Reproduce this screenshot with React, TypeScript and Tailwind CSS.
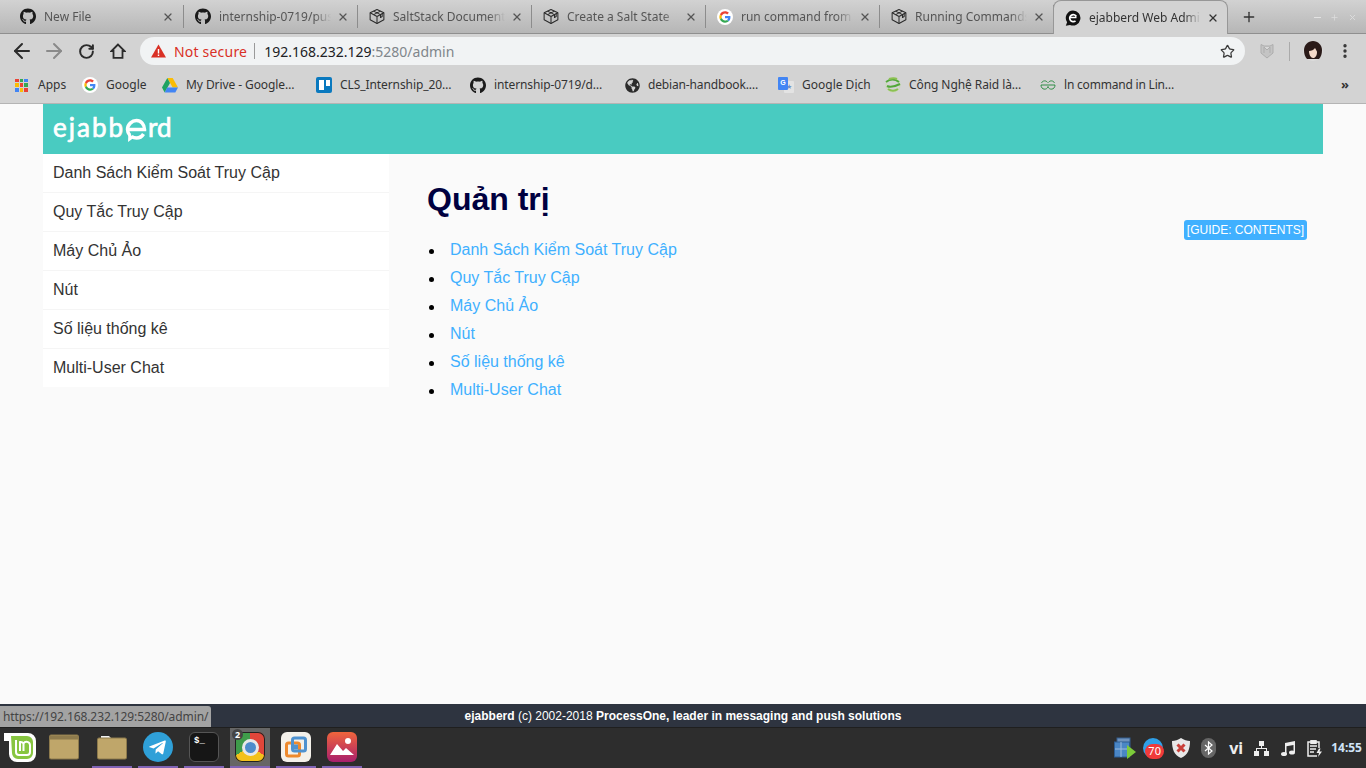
import { FC, ReactNode } from "react";
import { ArrowLeft, ArrowRight, MoreVertical, Plus, RotateCw, Star, X } from "lucide-react";
import { FaGithub, FaGlobeAmericas, FaTelegramPlane } from "react-icons/fa";

const GoogleIcon = ({ size = 16 }: { size?: number }) => (
  <svg width={size} height={size} viewBox="0 0 48 48" className="rounded-full bg-white">
    <g transform="translate(7 7) scale(0.71)">
      <path fill="#EA4335" d="M24 9.5c3.5 0 6.7 1.2 9.2 3.600l6.900-6.900C35.900 2.400 30.400 0 24 0 14.600 0 6.500 5.400 2.600 13.200l8 6.200C12.500 13.600 17.800 9.500 24 9.500z" />
      <path fill="#4285F4" d="M46.900 24.500c0-1.600-.1-3.100-.4-4.500H24v9h12.900c-.6 3-2.200 5.500-4.700 7.200l7.700 6c4.500-4.200 7-10.300 7-17.700z" />
      <path fill="#FBBC05" d="M10.500 28.600c-.5-1.500-.8-3-.8-4.600s.3-3.100.8-4.600l-8-6.200C.9 16.500 0 20.100 0 24s.9 7.500 2.600 10.800l7.900-6.200z" />
      <path fill="#34A853" d="M24 48c6.500 0 11.900-2.100 15.900-5.800l-7.700-6c-2.200 1.400-4.900 2.300-8.200 2.300-6.200 0-11.500-4.200-13.400-9.900l-8 6.200C6.500 42.600 14.600 48 24 48z" />
    </g>
  </svg>
);

const SaltIcon = () => (
  <svg width="17" height="17" viewBox="0 0 17 17" fill="none" stroke="#2b2b2b" strokeWidth="1.100" strokeLinejoin="round">
    <path d="M8.500 1 15.800 4.500V12L8.500 16 1.200 12V4.500z" />
    <path d="M1.200 4.500 8.500 8.500 15.800 4.500M8.500 8.500V16" />
    <path d="M4.800 2.800 12.200 6.500V9.500L14 8.500V5.300M12.200 2.800 5 6.500" />
  </svg>
);

const EjabberdTabIcon = () => (
  <svg width="16" height="16" viewBox="0 0 16 16">
    <path fill="#111" d="M8 .5a7.500 7.500 0 1 1-3 14.400L.8 15.800l1.300-3.600A7.500 7.500 0 0 1 8 .5z" />
    <path fill="none" stroke="#fff" strokeWidth="1.700" d="M4.500 7.500h7M11.300 6.500A3.500 3.500 0 1 0 10.500 10.800" />
  </svg>
);

type TabProps = { icon: ReactNode; title: string; first?: boolean };

const Tab: FC<TabProps> = ({ icon, title, first }) => (
  <div
    className={`flex h-[33px] shrink-0 items-center border-r border-[#8c8c8c] pl-[11px] [border-image:linear-gradient(transparent_6px,#8c8c8c_6px,#8c8c8c_27px,transparent_27px)_1] ${
      first ? "w-[175px]" : "w-[174px]"
    }`}
  >
    <span className="flex w-[16px] items-center justify-center">{icon}</span>
    <span className="ml-2 w-[112px] whitespace-nowrap text-[12px] text-[#555] [mask-image:linear-gradient(to_right,black_85%,transparent)]">
      {title}
    </span>
    <X size={12} strokeWidth={2.500} className="ml-[6px] text-[#555]" />
  </div>
);

const TabStrip = () => (
  <div className="flex h-[34px] shrink-0 border-b border-[#8f8f8f] bg-gradient-to-b from-[#d2d2d2] to-[#b6b6b6] pl-[9px]">
    <Tab first icon={<FaGithub size={17} className="text-[#1b1b1b]" />} title="New File" />
    <Tab icon={<FaGithub size={17} className="text-[#1b1b1b]" />} title="internship-0719/pus" />
    <Tab icon={<SaltIcon />} title="SaltStack Document" />
    <Tab icon={<SaltIcon />} title="Create a Salt State" />
    <Tab icon={<GoogleIcon />} title="run command from" />
    <Tab icon={<SaltIcon />} title="Running Commands" />
    <div className="z-10 -ml-px flex h-[34px] w-[175px] shrink-0 items-center rounded-t-[8px] border border-b-0 border-[#979797] bg-[#d3d3d3] pl-[11px]">
      <EjabberdTabIcon />
      <span className="ml-[8px] w-[112px] whitespace-nowrap text-[12px] text-[#333] [mask-image:linear-gradient(to_right,black_85%,transparent)]">
        ejabberd Web Admi
      </span>
      <X size={12} strokeWidth={2.500} className="ml-[6px] text-[#333]" />
    </div>
    <Plus size={16} strokeWidth={2} className="ml-[13px] mt-[9px] text-[#333]" />
    <div className="ml-auto mr-[9px] mt-[11px] flex h-[12px] items-center gap-[9px] text-[#dcdcdc]">
      <span className="h-[1px] w-[7px] bg-[#e2e2e2]" />
      <Plus size={9} strokeWidth={2} />
      <X size={9} strokeWidth={2.500} />
    </div>
  </div>
);

const Toolbar = () => (
  <div className="flex h-[34px] shrink-0 items-center bg-[#d3d3d3] pl-[10px]">
    <ArrowLeft size={24} strokeWidth={2} className="text-[#2b2b2b]" />
    <ArrowRight size={24} strokeWidth={2} className="ml-[8px] text-[#8a8a8a]" />
    <RotateCw size={17} strokeWidth={2.800} className="ml-[12px] text-[#2b2b2b]" />
    <svg width="16" height="16" viewBox="0 0 16 16" className="ml-[15px]" fill="none" stroke="#2b2b2b" strokeWidth="1.800">
      <path d="M8 1.500 1.500 8H3.500V14.800H12.500V8H14.500z" strokeLinejoin="miter" />
    </svg>
    <div className="ml-[14px] flex h-[28px] w-[1105px] items-center rounded-full bg-[#f1f3f4] pl-[11px] pr-[10px] text-[14px]">
      <svg width="15" height="14" viewBox="0 0 15 14">
        <path fill="#d93025" d="M7.500.500 15 13.500H0z" />
        <path fill="#fff" d="M6.800 5h1.400v4.500H6.800zM6.800 10.500h1.400v1.400H6.800z" />
      </svg>
      <span className="ml-[8px] tracking-[0.2px] text-[#d93025]">Not secure</span>
      <span className="ml-[7px] h-[16px] w-px bg-[#9a9a9a]" />
      <span className="ml-[9px] text-[#202124]">192.168.232.129</span>
      <span className="text-[#80868b]">:5280/admin</span>
      <Star size={15} strokeWidth={2} className="ml-auto text-[#3a3a3a]" />
    </div>
    <svg width="14" height="16" viewBox="0 0 14 16" className="ml-[15px]" fill="#c4c4c4" stroke="#adadad">
      <path d="M1 1.500 4 3h6l3-1.500V10l-6 5-6-5z" />
      <path fill="#d8d8d8" d="M4 4v6M10 4v6M4 4l3 3 3-3" />
    </svg>
    <span className="ml-[15px] h-[19px] w-px bg-[#aaaaaa]" />
    <svg width="20" height="20" viewBox="0 0 20 20" className="ml-[13px]">
      <circle cx="10" cy="10" r="10" fill="#dcdcdc" />
      <path fill="#2a1a18" d="M10 0c5 0 9 4 9 9 0 4-1 7-3 9H4C2 16 1 13 1 9c0-5 4-9 9-9z" />
      <path fill="#f4d9c9" d="M6 10c2 0 5-1 6-3 1 2 2 3 2 4 0 4-2 6-4 6s-4-3-4-7z" />
    </svg>
    <MoreVertical size={18} strokeWidth={2.500} className="ml-[13px] text-[#333]" />
  </div>
);

const AppsIcon = () => {
  const cols = ["#ea4335", "#34a853", "#4285f4", "#fbbc05", "#ea4335", "#34a853", "#4285f4", "#fbbc05", "#ea4335"];
  return (
    <div className="grid h-[13px] w-[13px] grid-cols-3 gap-px">
      {cols.map((c, i) => (
        <span key={i} style={{ backgroundColor: c }} />
      ))}
    </div>
  );
};

const DriveIcon = () => (
  <svg width="16" height="15" viewBox="0 0 16 15">
    <path fill="#fbbc05" d="M5.300 0h5.400l5.300 9.500h-5.300z" />
    <path fill="#1ea362" d="M5.300 0 0 9.500 2.700 14.500 8 5z" />
    <path fill="#4285f4" d="M5.200 9.500H16l-2.700 5H2.700z" />
  </svg>
);

const TrelloIcon = () => (
  <div className="flex h-[16px] w-[16px] items-start gap-[2px] rounded-[2px] bg-[#0a79bf] p-[2.500px]">
    <span className="h-[10px] w-[5px] bg-white" />
    <span className="h-[6px] w-[4px] bg-white" />
  </div>
);

const TranslateIcon = () => (
  <div className="relative h-[16px] w-[16px]">
    <span className="absolute left-[6px] top-[4px] flex h-[12px] w-[10px] items-center justify-center rounded-[1px] bg-[#e3e3e3] text-[7px] text-[#6d8fc9]">
      ★
    </span>
    <span className="absolute left-0 top-0 flex h-[13px] w-[10px] items-center justify-center rounded-[1px] bg-[#4285f4] font-['Liberation_Sans',sans-serif] text-[7px] font-bold text-white">
      G
    </span>
  </div>
);

const RaidIcon = () => (
  <svg width="16" height="16" viewBox="0 0 16 16" fill="none" strokeWidth="2">
    <circle cx="8" cy="8" r="7" stroke="#c9dcb0" strokeWidth="1" />
    <path stroke="#52a83a" d="M1 5c4-3 9-3 13 0M2 9c4 2 9 0 13-2" />
    <path stroke="#8cc152" d="M3 12c3 2 7 2 10 0M4 2c3-1 6-1 8 0" />
  </svg>
);

const GfgIcon = () => (
  <svg width="16" height="10" viewBox="0 0 16 10" fill="none" stroke="#2f8d46" strokeWidth="1">
    <path d="M1 5h14M1.500 3C2.500 .5 6 0 7.500 2.500M14.500 3C13.500 .5 10 0 8.500 2.500M1 5c0 5 6 5.500 7 1.500M15 5c0 5-6 5.500-7 1.500" />
  </svg>
);

type BookmarkProps = { icon: ReactNode; label: string; width: string; spacing?: string };

const Bookmark: FC<BookmarkProps> = ({ icon, label, width, spacing }) => (
  <div className={`flex shrink-0 items-center ${width}`}>
    <span className="flex w-[16px] items-center justify-center">{icon}</span>
    <span className={`ml-[8px] whitespace-nowrap text-[12px] text-[#333] ${spacing ?? ""}`}>{label}</span>
  </div>
);

const BookmarkBar = () => (
  <div className="flex h-[36px] shrink-0 items-center border-b border-[#b4b4b4] bg-[#d3d3d3] pb-[1px] pl-[15px]">
    <div className="flex w-[67px] shrink-0 items-center">
      <AppsIcon />
      <span className="ml-[10px] text-[12px] text-[#333]">Apps</span>
    </div>
    <Bookmark icon={<GoogleIcon />} label="Google" width="w-[80px]" />
    <Bookmark icon={<DriveIcon />} label="My Drive - Google…" width="w-[154px]" spacing="tracking-[-0.08px]" />
    <Bookmark icon={<TrelloIcon />} label="CLS_Internship_20…" width="w-[154px]" spacing="tracking-[-0.08px]" />
    <Bookmark icon={<FaGithub size={17} className="text-[#1b1b1b]" />} label="internship-0719/d…" width="w-[154px]" spacing="tracking-[-0.12px]" />
    <Bookmark icon={<FaGlobeAmericas size={15} className="text-[#2b2b2b]" />} label="debian-handbook.…" width="w-[154px]" spacing="tracking-[-0.15px]" />
    <Bookmark icon={<TranslateIcon />} label="Google Dịch" width="w-[107px]" />
    <Bookmark icon={<RaidIcon />} label="Công Nghệ Raid là…" width="w-[155px]" spacing="tracking-[-0.08px]" />
    <Bookmark icon={<GfgIcon />} label="ln command in Lin…" width="w-[150px]" spacing="tracking-[-0.2px]" />
    <span className="ml-auto mr-[17px] text-[13px] font-bold text-[#333]">»</span>
  </div>
);

const EjabberdLogo = () => (
  <div className="flex items-start font-['Lato',sans-serif] text-[26px] leading-[28px] text-white [-webkit-text-stroke:0.7px_white]">
    <span className="tracking-[2px]">ejabb</span>
    <svg width="23" height="24" viewBox="0 0 23 24" className="mt-[5px]">
      <path fill="none" stroke="#fff" strokeWidth="3.500" d="M3.500 11.500h16c0-5-3.500-9-8-9s-9 4-9 9c0 2.500 1 4.500 2.500 6" />
      <path fill="none" stroke="#fff" strokeWidth="3.500" d="M18.500 16c-1.500 2.500-4 4-7 4-2 0-3.500-.5-5-1.500" />
      <path fill="#fff" d="M3.500 14l5 6-5.500 4z" />
    </svg>
    <span>rd</span>
  </div>
);

const links = [
  "Danh Sách Kiểm Soát Truy Cập",
  "Quy Tắc Truy Cập",
  "Máy Chủ Ảo",
  "Nút",
  "Số liệu thống kê",
  "Multi-User Chat",
];

const Page = () => (
  <div className="min-h-0 flex-1 bg-[#fafafa] px-[43px] font-['Liberation_Sans',sans-serif]">
    <div className="flex h-[50px] items-center bg-[#49cbc1] pb-[3px] pl-[10px]">
      <EjabberdLogo />
    </div>
    <div className="flex">
      <div className="w-[346px] shrink-0 self-start bg-white">
        {links.map((l) => (
          <div key={l} className="flex h-[39px] items-center border-b border-[#f5f5f5] pl-[10px] text-[16px] text-[#333] last:h-[38px] last:border-b-0">
            {l}
          </div>
        ))}
      </div>
      <div className="flex flex-1 justify-between pl-[38px] pr-[16px]">
        <div>
          <h1 className="mt-[27px] text-[32px] font-bold leading-[37px] text-[#000040]">Quản trị</h1>
          <ul className="mt-[18px] pl-[2px] text-[16px] leading-[28px] text-[#40b0ff]">
            {links.map((l) => (
              <li key={l} className="flex items-center">
                <span className="mr-[16px] mt-[3px] h-[5px] w-[5px] rounded-full bg-black" />
                {l}
              </li>
            ))}
          </ul>
        </div>
        <div className="mt-[66px] flex h-[20px] w-[123px] items-center justify-center rounded-[3px] bg-[#40b0ff] text-[12px] text-white">
          [GUIDE: CONTENTS]
        </div>
      </div>
    </div>
  </div>
);

const Footer = () => (
  <div className="relative h-[23px] shrink-0 bg-[#2e3440] text-center font-['Liberation_Sans',sans-serif] text-[12px] leading-[24px] text-white">
    <b>ejabberd</b> (c) 2002-2018 <b>ProcessOne, leader in messaging and push solutions</b>
    <div className="absolute bottom-0 left-0 h-[21px] w-[211px] rounded-tr-[3px] bg-[#a3a3a3] pl-[3px] text-left font-['Noto_Sans',sans-serif] text-[12px] leading-[21px] tracking-[-0.1px] text-[#444]">
      https://192.168.232.129:5280/admin/
    </div>
  </div>
);

const FolderIcon = ({ tab }: { tab?: boolean }) => (
  <svg width="30" height="26" viewBox="0 0 30 26">
    {tab && <path fill="#f2f2f2" d="M4 2h8l2 2H4z" />}
    <rect x="0.500" y={tab ? 4 : 1} width="29" height={tab ? 21 : 24} rx="1.500" fill="#bfa66a" stroke="#8d7a4c" />
    {!tab && <rect x="1" y="1.500" width="28" height="4" fill="#8e7b4d" />}
  </svg>
);

const DockSlot: FC<{ children: ReactNode; active?: boolean }> = ({ children, active }) => (
  <div className={`flex h-[40px] w-[40px] shrink-0 items-center justify-center border-b-[2px] border-[#7f63b5] ${active ? "bg-[#666666]" : ""}`}>
    {children}
  </div>
);

const MintIcon = () => (
  <svg width="32" height="30" viewBox="0 0 32 30">
    <path fill="#fff" d="M0 1h24a8 8 0 0 1 8 8v13a8 8 0 0 1-8 8H13a8 8 0 0 1-8-8V9H0z" />
    <path fill="#87c540" d="M7 4h16a6 6 0 0 1 6 6v11a6 6 0 0 1-6 6H14a6 6 0 0 1-6-6z" />
    <path fill="none" stroke="#fff" strokeWidth="2" d="M12 8v12a3 3 0 0 0 3 3h8a3 3 0 0 0 3-3v-7a3.500 3.500 0 0 0-6.500-1.500A3.500 3.500 0 0 0 16 10v9M19.500 12v7" />
  </svg>
);

const ChromeIcon = () => (
  <div className="flex h-[30px] w-[30px] items-center justify-center overflow-hidden rounded-[7px] bg-[conic-gradient(#e0463a_0deg_120deg,#f3c11c_120deg_240deg,#3f9c4a_240deg_360deg)] shadow-[inset_0_0_0_1px_#222]">
    <span className="h-[17px] w-[17px] rounded-full border-[3px] border-[#e8e8e8] bg-[#4e8ccb]" />
  </div>
);

const VmwareIcon = () => (
  <div className="flex h-[30px] w-[30px] items-center justify-center rounded-[6px] bg-[#f4f1ea]">
    <svg width="22" height="22" viewBox="0 0 22 22" fill="none" strokeWidth="3">
      <rect x="1.500" y="7" width="13" height="13" rx="2" stroke="#ee8a2d" />
      <rect x="7.500" y="2" width="13" height="13" rx="2" stroke="#4f92cf" />
      <rect x="9" y="8.500" width="4" height="5" fill="#4f92cf" stroke="none" />
    </svg>
  </div>
);

const PhotosIcon = () => (
  <svg width="30" height="30" viewBox="0 0 30 30">
    <defs>
      <linearGradient id="ph" x1="0" y1="0" x2="0" y2="1">
        <stop offset="0" stopColor="#f0653c" />
        <stop offset="1" stopColor="#a81f6c" />
      </linearGradient>
    </defs>
    <rect width="30" height="30" rx="6" fill="url(#ph)" />
    <circle cx="21" cy="9" r="3" fill="#fff" />
    <path fill="#fff" d="M3 23 10 12l6 7 3-3 8 7z" />
  </svg>
);

const Taskbar = () => (
  <div className="flex h-[41px] shrink-0 items-end border-t border-[#1f1f1f] bg-[#2d2d2d]">
    <div className="mb-[6px] ml-[4px] flex w-[32px] shrink-0">
      <MintIcon />
    </div>
    <div className="mb-[8px] ml-[13px] flex w-[30px] shrink-0 justify-center">
      <FolderIcon />
    </div>
    <div className="ml-[13px] flex gap-[6px]">
      <DockSlot>
        <FolderIcon tab />
      </DockSlot>
      <DockSlot>
        <span className="flex h-[30px] w-[30px] items-center justify-center rounded-full bg-[#2fa0d8] pr-[2px]">
          <FaTelegramPlane size={19} className="text-white" />
        </span>
      </DockSlot>
      <DockSlot>
        <span className="h-[30px] w-[30px] rounded-[6px] border border-[#555] bg-[#161616] pl-[4px] font-['Liberation_Mono',monospace] text-[9px] font-bold leading-[16px] text-white">
          $_
        </span>
      </DockSlot>
      <DockSlot active>
        <div className="relative">
          <ChromeIcon />
          <span className="absolute left-[-3px] top-[-3px] flex h-[11px] w-[11px] items-center justify-center rounded-full bg-[#444] font-['Noto_Sans',sans-serif] text-[9px] font-bold text-white">
            2
          </span>
        </div>
      </DockSlot>
      <DockSlot>
        <VmwareIcon />
      </DockSlot>
      <DockSlot>
        <PhotosIcon />
      </DockSlot>
    </div>
    <div className="mb-[9px] ml-auto flex items-center pr-[4px]">
      <svg width="22" height="22" viewBox="0 0 22 22">
        <rect x="3" y="1" width="13" height="12" fill="#6f93bd" stroke="#355f8f" />
        <rect x="0.500" y="5" width="15" height="15" fill="#4a86c5" stroke="#2c5c92" />
        <path d="M7 5v15M1 12h14" stroke="#9dbbdb" />
        <path fill="#7ccb3a" d="M13 8l9 7-9 7z" />
      </svg>
      <span className="relative ml-[7px] h-[20px] w-[20px] rounded-full bg-[#2fa0e8]">
        <span className="absolute bottom-[-1px] right-[-1px] flex h-[15px] w-[19px] items-center justify-center rounded-full bg-[#f03a3a] font-['Noto_Sans',sans-serif] text-[11px] text-white">
          70
        </span>
      </span>
      <svg width="20" height="20" viewBox="0 0 20 20" className="ml-[8px]">
        <path fill="#e8e8e8" d="M10 0c3 2 6 3 9 3 0 8-2 14-9 17C3 17 1 11 1 3c3 0 6-1 9-3z" />
        <path stroke="#c9403a" strokeWidth="3" d="M6.500 6.500l7 7M13.500 6.500l-7 7" />
      </svg>
      <span className="ml-[10px] flex h-[20px] w-[15px] items-center justify-center rounded-full bg-[#666]">
        <svg width="9" height="14" viewBox="0 0 9 14" fill="none" stroke="#fff" strokeWidth="1.200">
          <path d="M1 4l7 6-3.500 3V1L8 4 1 10" />
        </svg>
      </span>
      <span className="ml-[13px] w-[14px] font-['Noto_Sans',sans-serif] text-[16px] font-bold leading-none text-[#eee]">vi</span>
      <svg width="15" height="15" viewBox="0 0 15 15" className="ml-[11px]" fill="#eee">
        <rect x="5" y="0" width="5" height="5" />
        <rect x="0" y="10" width="5" height="5" />
        <rect x="10" y="10" width="5" height="5" />
        <path d="M7 5h1v2h5v3h-1V8H3v2H2V7h5z" />
      </svg>
      <svg width="14" height="15" viewBox="0 0 14 15" className="ml-[12px]" fill="#eee">
        <path d="M4 2l10-2v11h-1.500V4L5.500 5.200V13H4z" />
        <ellipse cx="3" cy="13" rx="3" ry="2" />
        <ellipse cx="11" cy="11.500" rx="3" ry="2" />
      </svg>
      <svg width="15" height="17" viewBox="0 0 15 17" className="ml-[12px]" fill="none" stroke="#eee" strokeWidth="1.500">
        <path d="M4 2H1v14h9M9 2h3v6" />
        <rect x="4" y="0.800" width="5" height="2.500" fill="#eee" />
        <path d="M3 6h7M3 9h6M3 12h4" />
        <path fill="#eee" stroke="none" d="M12 8.500l-2.500 4.500H12l-1 4 4-5.500h-2.500l1-3z" />
      </svg>
      <span className="ml-[9px] font-['Noto_Sans',sans-serif] text-[12px] font-bold text-[#cfe3f7]">14:55</span>
    </div>
  </div>
);

export default function App() {
  return (
    <div className="flex h-[768px] w-[1366px] flex-col overflow-hidden font-['Noto_Sans',sans-serif]">
      <TabStrip />
      <Toolbar />
      <BookmarkBar />
      <Page />
      <Footer />
      <Taskbar />
    </div>
  );
}
